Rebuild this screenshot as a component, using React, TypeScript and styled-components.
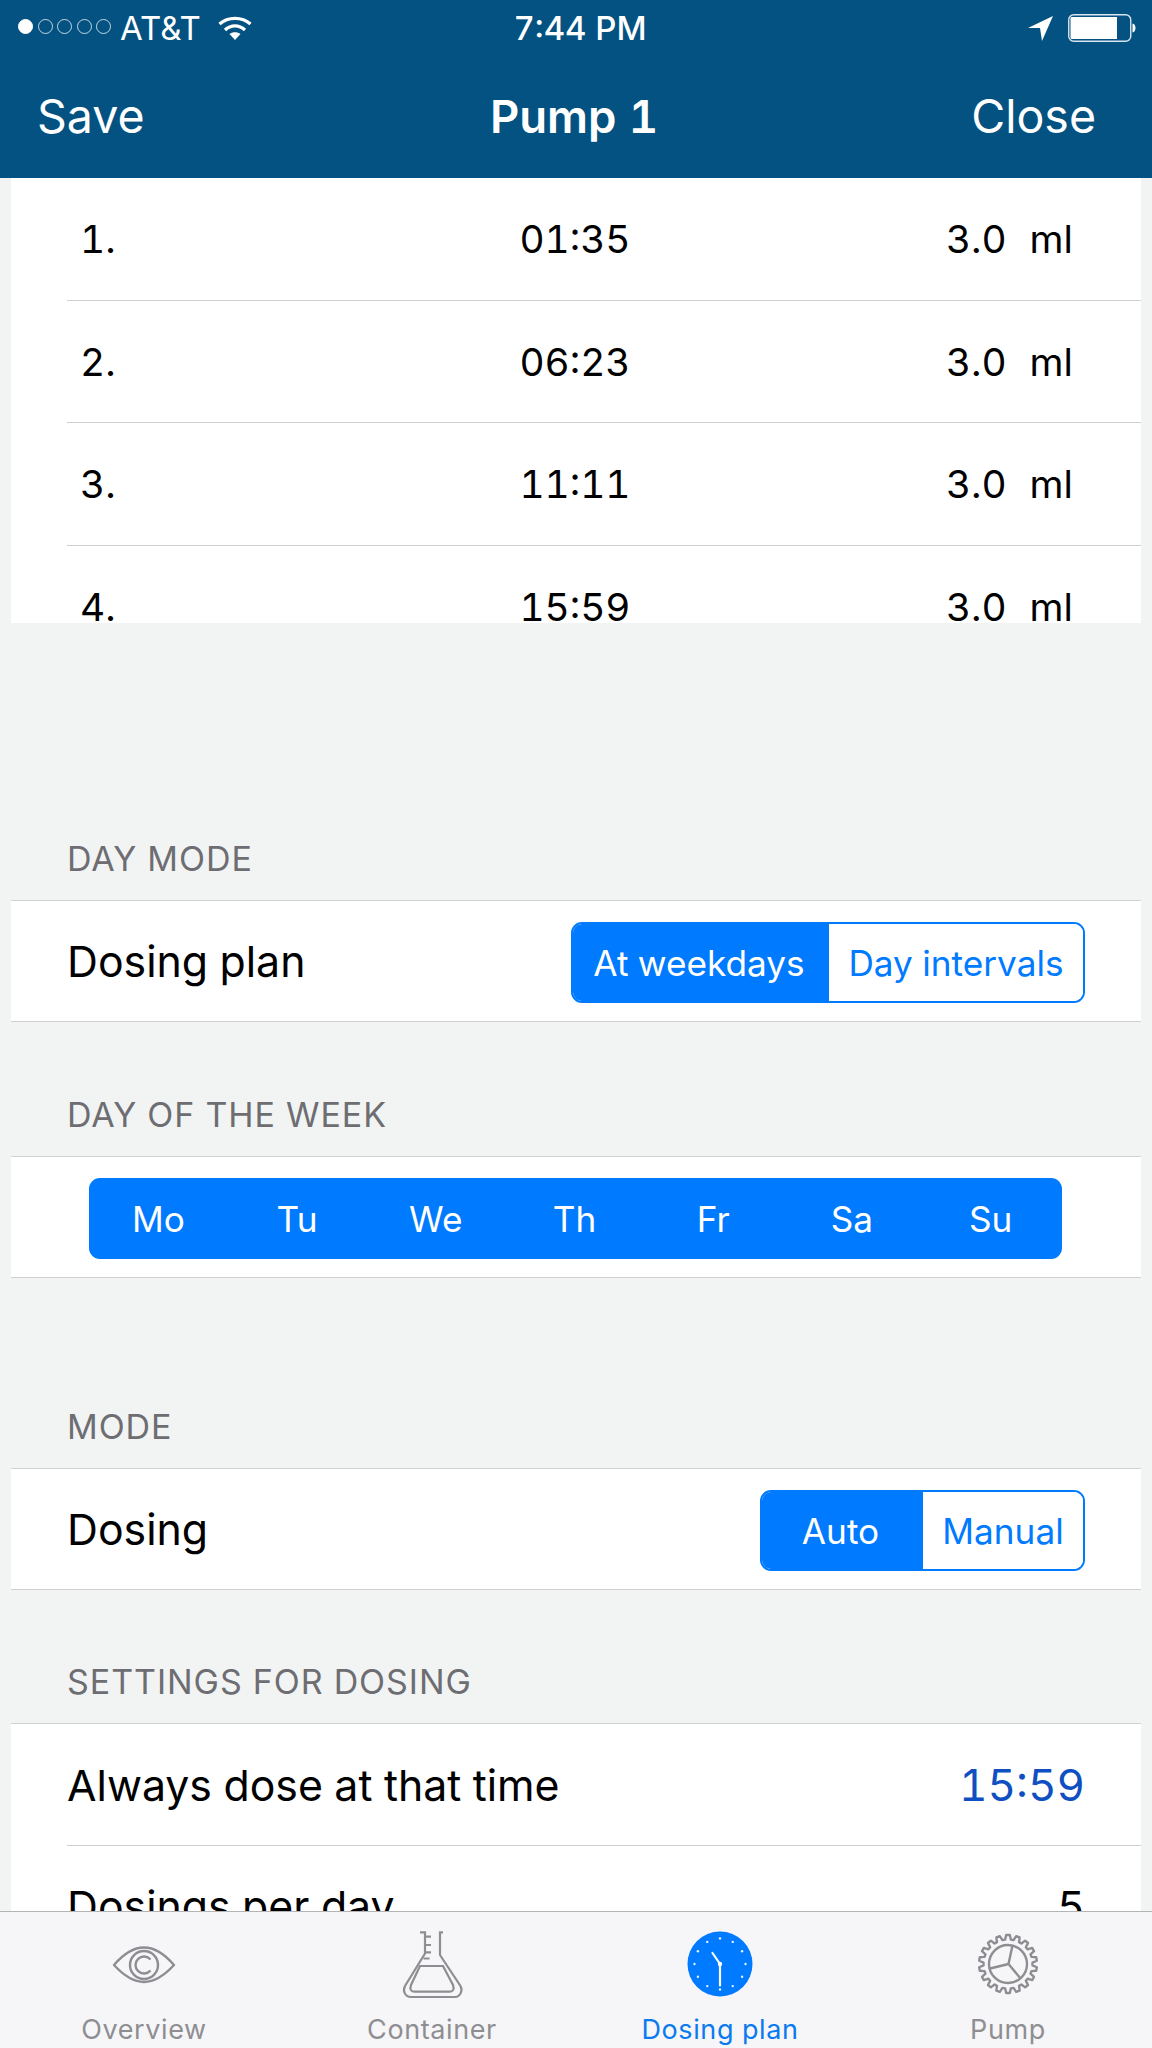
import React from "react";
import styled, { createGlobalStyle } from "styled-components";

const Global = createGlobalStyle`
  html, body { margin: 0; padding: 0; background: #f2f4f4; }
  body { font-family: Inter, "Liberation Sans", sans-serif; -webkit-font-smoothing: antialiased; font-variant-numeric: tabular-nums; }
`;
const Screen = styled.div`
  width: 1152px; height: 2048px; display: flex; flex-direction: column; overflow: hidden; background: #f2f4f4;
`;
const TopBar = styled.header`
  height: 178px; flex: none; background: #035281; color: #fff; box-sizing: border-box; display: flex; flex-direction: column;
`;
const StatusBar = styled.div`
  height: 56px; flex: none; padding: 0 15px 0 18px; display: grid; grid-template-columns: 1fr auto 1fr; align-items: center; font-size: 33px;
`;
const StatusLeft = styled.div`display: flex; align-items: center; gap: 9px;`;
const StatusRight = styled.div`display: flex; align-items: center; justify-content: flex-end; gap: 15px;`;
const Dots = styled.div`display: flex; gap: 4.5px; margin-bottom: 3px;`;
const Dot = styled.span<{ $on?: boolean }>`
  width: 15px; height: 15px; border-radius: 50%; box-sizing: border-box; border: 1.2px solid ${p => (p.$on ? "#fff" : "rgba(255,255,255,0.75)")}; background: ${p => (p.$on ? "#fff" : "transparent")};
`;
const Carrier = styled.span`margin-right: 8px;`;
const Clock = styled.div`font-weight: 500; margin-left: 5px;`;
const NavBar = styled.nav`
  flex: 1; display: grid; grid-template-columns: 1fr auto 1fr; align-items: center; padding: 0 56px 2px 37px; font-size: 46.5px;
`;
const NavTitle = styled.div`font-weight: 600; font-size: 45.5px; margin-left: 15px;`;
const NavRight = styled.div`text-align: right;`;
const Scroll = styled.main`
  flex: 1; min-height: 0; overflow: hidden; padding: 0 11px;
`;
const Table = styled.div`height: 445px; overflow: hidden; background: #fff; padding-left: 56px;`;
const DoseRow = styled.div`
  height: 122.5px; box-sizing: border-box; border-bottom: 1px solid #cfd0d2; display: grid; grid-template-columns: 1fr 1fr 1fr; align-items: center; font-size: 38.8px; color: #000; padding-right: 68px;
`;
const DoseIndex = styled.div`padding-left: 13px;`;
const DoseTime = styled.div`text-align: center; padding-left: 10px;`;
const DoseAmount = styled.div`display: flex; justify-content: flex-end; gap: 23px;`;
const SectionLabel = styled.div<{ $top: number }>`
  margin-top: ${p => p.$top}px; height: 42px; line-height: 42px; margin-bottom: 20px; padding-left: 56px; font-size: 34px; letter-spacing: 0.95px; color: #6d6d72;
`;
const Group = styled.section`background: #fff; border-top: 1px solid #d0d1d3; border-bottom: 1px solid #d0d1d3;`;
const Row = styled.div<{ $divider?: boolean }>`
  height: ${p => (p.$divider ? 122 : 120)}px; box-sizing: border-box; padding-top: 3px; margin-left: 56px; padding-right: 56px; display: flex; align-items: center; justify-content: space-between; font-size: 42.8px; color: #000;
  ${p => (p.$divider ? "border-bottom: 1px solid #cfd0d2;" : "")}
`;
const RowText = styled.span`margin-bottom: 2px;`;
const TimeValue = styled.span`color: #0f4fc2; font-size: 44px; margin-bottom: 2px;`;
const Segmented = styled.div`
  display: flex; height: 81px; border: 2px solid #007aff; border-radius: 11px; overflow: hidden; box-sizing: border-box; font-size: 35.2px;
`;
const Segment = styled.div<{ $active?: boolean; $w: number }>`
  width: ${p => p.$w}px; box-sizing: border-box; padding-right: ${p => (p.$active ? 4 : 0)}px; display: flex; align-items: center; justify-content: center; background: ${p => (p.$active ? "#007aff" : "#fff")}; color: ${p => (p.$active ? "#fff" : "#007aff")};
`;
const WeekRow = styled.div`height: 120px; box-sizing: border-box; padding-top: 3px; display: flex; align-items: center; justify-content: center;`;
const Week = styled.div`
  width: 973px; height: 81px; box-sizing: border-box; padding-right: 2px; margin-left: -1px; background: #007aff; border-radius: 11px; display: grid; grid-template-columns: repeat(7, 1fr); align-items: center; text-align: center; color: #fff; font-size: 35.2px;
`;
const TabBar = styled.footer`
  height: 137px; flex: none; box-sizing: border-box; border-top: 1px solid #b4b4b6; background: #f6f6f8; display: grid; grid-template-columns: repeat(4, 1fr);
`;
const Tab = styled.div<{ $active?: boolean }>`
  display: flex; flex-direction: column; align-items: center; color: ${p => (p.$active ? "#0a7af0" : "#8e8e92")}; font-size: 27px; letter-spacing: 0.6px; padding-top: 17px;
`;
const TabIcon = styled.svg`width: 70px; height: 70px; flex: none; display: block;`;
const TabLabel = styled.div`margin-top: 15px; line-height: 32px;`;

const EyeIcon = () => (
  <TabIcon viewBox="0 0 70 70" fill="none" stroke="#8e8e92" strokeWidth="2.4">
    <path d="M5 36 C17 22 27 18.5 35 18.5 C43 18.5 53 22 65 36 C53 49 43 53 35 53 C27 53 17 49 5 36Z" strokeLinejoin="round" />
    <circle cx="35" cy="36" r="14" />
    <path d="M41.5 30.5 A8.5 8.5 0 1 0 41.5 41.5" />
  </TabIcon>
);
const FlaskIcon = () => (
  <TabIcon viewBox="0 0 70 70" fill="none" stroke="#8e8e92" strokeWidth="2.2">
    <path d="M23 3.3 H28 V24.5 L8 57 C5.5 62 8 68 14 68 H58 C63 68 66 62 63.5 57 L43 26 V3.3 H46" />
    <path d="M28 7.7 H34 M28 16 H34 M28 23.3 H34 M26.5 29.5 H32.5" />
    <path d="M23 37 H46 L56 56 C57.5 60 56 62.7 53 62.7 H17 C14 62.7 12.5 60 14 56 Z" />
  </TabIcon>
);
const ticks = Array.from({ length: 12 }, (_, i) => (i * Math.PI) / 6);
const ClockIcon = () => (
  <TabIcon viewBox="0 0 70 70">
    <circle cx="35" cy="35" r="32.5" fill="#007aff" />
    {ticks.map((a, i) => (
      <circle key={i} cx={35 + 25.5 * Math.sin(a)} cy={35 - 25.5 * Math.cos(a)} r="1.2" fill="#fff" opacity="0.9" />
    ))}
    <path d="M35 35 L35 56.5 M35 35 L27.5 24" stroke="#fff" strokeWidth="2.2" strokeLinecap="round" />
    <circle cx="35" cy="35" r="2.2" fill="#fff" />
  </TabIcon>
);
const gearPath = (() => {
  const n = 18, out = 29, inn = 24.5, cx = 35, cy = 35;
  const pts: string[] = [];
  for (let i = 0; i < n; i++) {
    const a = (i / n) * Math.PI * 2;
    const d = (Math.PI * 2) / n;
    [[a - d * 0.34, inn], [a - d * 0.18, out], [a + d * 0.18, out], [a + d * 0.34, inn]].forEach(([t, r]) => {
      pts.push(`${(cx + r * Math.sin(t)).toFixed(2)} ${(cy - r * Math.cos(t)).toFixed(2)}`);
    });
  }
  return `M${pts.join(" L")}Z`;
})();
const GearIcon = () => (
  <TabIcon viewBox="0 0 70 70" fill="none" stroke="#8e8e92" strokeWidth="2.4">
    <path d={gearPath} strokeLinejoin="round" />
    <circle cx="35" cy="35" r="19" />
    <path d="M35.5 35 L39.5 16.5 M35.5 35 L17 39.5 M35.5 35 L48 50" />
  </TabIcon>
);
const Wifi = () => (
  <svg width="34" height="24" viewBox="0 0 34 24" fill="none" stroke="#fff" strokeWidth="3.4">
    <path d="M1.5 8 C10 0.5 24 0.5 32.5 8" />
    <path d="M7 14 C13 8.5 21 8.5 27 14" />
    <path d="M11.5 18 C14.5 15.5 19.5 15.5 22.5 18 L17 24 Z" fill="#fff" stroke="none" />
  </svg>
);
const Arrow = () => (
  <svg width="25" height="25" viewBox="0 0 25 25"><path d="M25 0 L0 12 L12 12 L14 25 Z" fill="#fff" /></svg>
);
const Battery = () => (
  <svg width="69" height="28" viewBox="0 0 69 28" fill="none">
    <rect x="0.75" y="0.75" width="62" height="26.5" rx="5" stroke="#fff" strokeOpacity="0.85" strokeWidth="1.4" />
    <path d="M4 3 H49 V25 H4 C3 25 2.5 24.5 2.5 23.5 V4.5 C2.5 3.5 3 3 4 3Z" fill="#fff" />
    <path d="M64.5 9.5 C68.5 10 68.5 18 64.5 18.5 Z" fill="#fff" />
  </svg>
);

const doses = [["1.", "01:35"], ["2.", "06:23"], ["3.", "11:11"], ["4.", "15:59"]];
const days = ["Mo", "Tu", "We", "Th", "Fr", "Sa", "Su"];

export default function App() {
  return (
    <Screen>
      <Global />
      <TopBar>
        <StatusBar>
          <StatusLeft>
            <Dots><Dot $on /><Dot /><Dot /><Dot /><Dot /></Dots>
            <Carrier>AT&amp;T</Carrier>
            <Wifi />
          </StatusLeft>
          <Clock>7:44 PM</Clock>
          <StatusRight><Arrow /><Battery /></StatusRight>
        </StatusBar>
        <NavBar>
          <div>Save</div>
          <NavTitle>Pump 1</NavTitle>
          <NavRight>Close</NavRight>
        </NavBar>
      </TopBar>
      <Scroll>
        <Table>
          {doses.map(([n, t]) => (
            <DoseRow key={n}>
              <DoseIndex>{n}</DoseIndex>
              <DoseTime>{t}</DoseTime>
              <DoseAmount><span>3.0</span><span>ml</span></DoseAmount>
            </DoseRow>
          ))}
        </Table>
        <SectionLabel $top={215}>DAY MODE</SectionLabel>
        <Group>
          <Row>
            <RowText>Dosing plan</RowText>
            <Segmented>
              <Segment $active $w={256}>At weekdays</Segment>
              <Segment $w={254}>Day intervals</Segment>
            </Segmented>
          </Row>
        </Group>
        <SectionLabel $top={72}>DAY OF THE WEEK</SectionLabel>
        <Group>
          <WeekRow>
            <Week>{days.map(d => <div key={d}>{d}</div>)}</Week>
          </WeekRow>
        </Group>
        <SectionLabel $top={128}>MODE</SectionLabel>
        <Group>
          <Row>
            <RowText>Dosing</RowText>
            <Segmented>
              <Segment $active $w={161}>Auto</Segment>
              <Segment $w={160}>Manual</Segment>
            </Segmented>
          </Row>
        </Group>
        <SectionLabel $top={71}>SETTINGS FOR DOSING</SectionLabel>
        <Group>
          <Row $divider>
            <RowText>Always dose at that time</RowText>
            <TimeValue>15:59</TimeValue>
          </Row>
          <Row>
            <RowText>Dosings per day</RowText>
            <RowText>5</RowText>
          </Row>
        </Group>
      </Scroll>
      <TabBar>
        <Tab><EyeIcon /><TabLabel>Overview</TabLabel></Tab>
        <Tab><FlaskIcon /><TabLabel>Container</TabLabel></Tab>
        <Tab $active><ClockIcon /><TabLabel>Dosing plan</TabLabel></Tab>
        <Tab><GearIcon /><TabLabel>Pump</TabLabel></Tab>
      </TabBar>
    </Screen>
  );
}
